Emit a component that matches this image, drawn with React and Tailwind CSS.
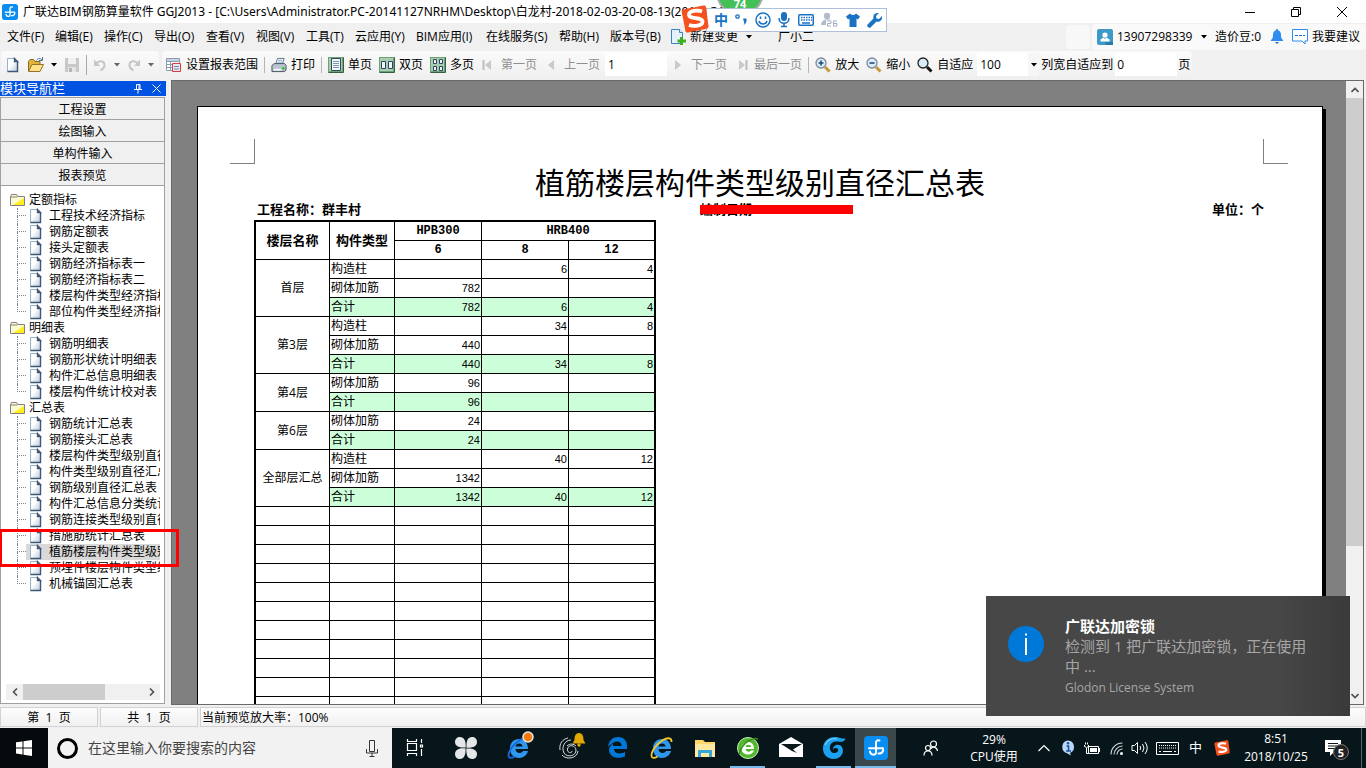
import React, { useState } from "react";

const menus = [
  ["文件(F)", "w-12"],
  ["编辑(E)", "w-[49px]"],
  ["操作(C)", "w-[50px]"],
  ["导出(O)", "w-[52px]"],
  ["查看(V)", "w-[50px]"],
  ["视图(V)", "w-[50px]"],
  ["工具(T)", "w-[49px]"],
  ["云应用(Y)", "w-[61px]"],
  ["BIM应用(I)", "w-[70px]"],
  ["在线服务(S)", "w-[73px]"],
  ["帮助(H)", "w-[51px]"],
  ["版本号(B)", "w-[61px]"],
];

const tree = [
  {
    name: "定额指标",
    items: ["工程技术经济指标", "钢筋定额表", "接头定额表", "钢筋经济指标表一", "钢筋经济指标表二", "楼层构件类型经济指标表", "部位构件类型经济指标表"],
  },
  {
    name: "明细表",
    items: ["钢筋明细表", "钢筋形状统计明细表", "构件汇总信息明细表", "楼层构件统计校对表"],
  },
  {
    name: "汇总表",
    items: [
      "钢筋统计汇总表",
      "钢筋接头汇总表",
      "楼层构件类型级别直径汇总表",
      "构件类型级别直径汇总表",
      "钢筋级别直径汇总表",
      "构件汇总信息分类统计表",
      "钢筋连接类型级别直径汇总表",
      "措施筋统计汇总表",
      "植筋楼层构件类型级别直径汇总表",
      "预埋件楼层构件类型级别汇总表",
      "机械锚固汇总表",
    ],
  },
];

const floors = [
  { name: "首层", rows: [["构造柱", "", "6", "4"], ["砌体加筋", "782", "", ""], ["合计", "782", "6", "4"]] },
  { name: "第3层", rows: [["构造柱", "", "34", "8"], ["砌体加筋", "440", "", ""], ["合计", "440", "34", "8"]] },
  { name: "第4层", rows: [["砌体加筋", "96", "", ""], ["合计", "96", "", ""]] },
  { name: "第6层", rows: [["砌体加筋", "24", "", ""], ["合计", "24", "", ""]] },
  { name: "全部层汇总", rows: [["构造柱", "", "40", "12"], ["砌体加筋", "1342", "", ""], ["合计", "1342", "40", "12"]] },
];

const Caret = ({ className = "" }) => (
  <svg className={`shrink-0 ${className}`} width="6" height="4" viewBox="0 0 6 4">
    <path d="M0 0h6L3 3.5z" fill="currentColor" />
  </svg>
);

const Sep = () => <span className="mx-1.5 h-4 w-px shrink-0 bg-[#b5b5b5]" />;

const DocIcon = () => (
  <svg className="shrink-0" width="16" height="16" viewBox="0 0 16 16">
    <defs>
      <linearGradient id="paper" x1="0" y1="0" x2="1" y2="1">
        <stop offset=".4" stopColor="#fff" />
        <stop offset="1" stopColor="#b9c9de" />
      </linearGradient>
    </defs>
    <path d="M2.500 1.500h7l3 3v10h-10z" fill="url(#paper)" stroke="#9db1cf" />
    <path d="M12.500 4.500v10h-10M9.500 1.500v3h3z" fill="none" stroke="#3c5777" strokeWidth="1.400" />
  </svg>
);

const FolderIcon = () => (
  <svg className="shrink-0" width="16" height="14" viewBox="0 0 16 14">
    <path d="M.5 12.500v-9l1-2h5l1 2h7v9z" fill="#fffbd0" stroke="#808080" />
    <path d="M14 5v7H3z" fill="#ffee1a" />
    <path d="M.5 4h6.500" stroke="#808080" />
  </svg>
);

const OpenIcon = () => (
  <svg className="shrink-0" width="18" height="16" viewBox="0 0 18 16">
    <path d="M1.500 14V4.500l1.500-2h3.500l1.500 2h5V7" fill="#e2b33f" stroke="#8a6a20" />
    <path d="M1.500 14.500L5 7.500h11.500L13 14.500z" fill="#ffe08a" stroke="#96732a" />
    <path d="M9.500 3.500c1.500-2.500 4-2.500 5.500-.5M15.500 0v3.500H12" fill="none" stroke="#52729c" />
  </svg>
);

const SaveIcon = () => (
  <svg className="shrink-0" width="16" height="16" viewBox="0 0 16 16">
    <path d="M1 1h14v14H1z" fill="#c8c8c8" />
    <path d="M4 1h8v6H4z" fill="#f0f0f0" />
    <path d="M4 10h8v5H4z" fill="#e6e6e6" />
    <path d="M5 11h3v4H5z" fill="#b5b5b5" />
  </svg>
);

const UndoIcon = ({ flip }) => (
  <svg className={flip ? "shrink-0 -scale-x-100" : "shrink-0"} width="14" height="14" viewBox="0 0 14 14">
    <path d="M3 5.500C6 2 11 2.500 11.500 6.500 12 10 9 11.500 7.500 12.500" fill="none" stroke="#c6c6c6" strokeWidth="2" />
    <path d="M1 1.500v6.500h6z" fill="#c6c6c6" />
  </svg>
);

const RangeIcon = () => (
  <svg className="shrink-0" width="16" height="16" viewBox="0 0 16 16">
    <path d="M.5 1.500h13v12H.5zM.5 4.500h13M.5 7.500h13M.5 10.500h13M4.500 1.500v12" fill="#fff" stroke="#8c9bb0" />
    <path d="M1 2h12v2H1z" fill="#c6d3e4" />
    <path d="M6.500 6.500h8v8h-8z" fill="#e3eaf4" stroke="#d93a3a" />
    <path d="M8 9.500h5M8 12h5" stroke="#6f86a8" />
  </svg>
);

const PrintIcon = () => (
  <svg className="shrink-0" width="16" height="16" viewBox="0 0 17 16">
    <path d="M5 7l2-6h7l-2 6z" fill="#fff" stroke="#5c6f87" />
    <path d="M7.500 3h4.500M7 5h4.500" stroke="#7ba0cf" />
    <path d="M1 8.500l2.500-2h11l1.500 2v5l-2 1.500H1z" fill="#b9c4d0" stroke="#44525f" />
    <path d="M3 12h8v2H3z" fill="#f2f5f8" />
    <circle cx="13" cy="11.500" r="1.500" fill="#2fc32f" />
  </svg>
);

const PagesIcon = ({ kind }) => (
  <svg className="shrink-0" width="16" height="16" viewBox="0 0 16 16">
    <rect width="16" height="16" rx="1" fill="#35603d" />
    <path d="M0 0h15v15H0z" fill="#6ba377" />
    <path d="M1 1h13v13H1z" fill="#a9cdb0" />
    {kind === 1 && <path d="M3.500 1.500h9v12h-9z" fill="#f4f8ff" stroke="#30455c" />}
    {kind === 1 && <path d="M5 4.500h6M5 6.500h6M5 8.500h6M5 10.500h6" stroke="#7e95b5" />}
    {kind === 2 && <path d="M2.500 4.500h4v7h-4zM9.500 4.500h4v7h-4z" fill="#eef4ff" stroke="#30455c" />}
    {kind === 4 && <path d="M3.500 2.500h3v4h-3zM9.500 2.500h3v4h-3zM3.500 9.500h3v4h-3zM9.500 9.500h3v4h-3z" fill="#eef4ff" stroke="#30455c" />}
  </svg>
);

const PageArrow = ({ bar, left }) => (
  <svg className={left ? "shrink-0 -scale-x-100" : "shrink-0"} width="11" height="12" viewBox="0 0 11 12">
    <path d="M2 1l6 5-6 5z" fill="#c9c9c9" />
    {bar && <path d="M9.500 1v10" stroke="#bdbdbd" strokeWidth="2" />}
  </svg>
);

const LensIcon = ({ sign, dark }) => (
  <svg className="shrink-0" width="16" height="16" viewBox="0 0 16 16">
    <path d="M10 10l4.500 4.500" stroke={dark ? "#111" : "#c8963a"} strokeWidth="3" />
    <circle cx="6" cy="6" r="5" fill="#d8ebf8" stroke={dark ? "#222" : "#7d8b99"} strokeWidth="1.300" />
    {sign === "+" && <path d="M3.500 6h5M6 3.500v5" stroke="#234a78" strokeWidth="1.600" />}
    {sign === "-" && <path d="M3.500 6h5" stroke="#234a78" strokeWidth="1.600" />}
  </svg>
);

const AppIcon = ({ size }) => (
  <svg className="shrink-0" width={size} height={size} viewBox="0 0 24 24">
    <rect width="24" height="24" rx="4" fill="#0a8df0" />
    <path
      d="M15.500 4.500c-2.500-.6-3.500.5-3.500 2.500v9.500c0 3-5.500 3-6-1M5 12.200h14M19 12.200c1 3-1.500 6-4.500 5.300"
      fill="none"
      stroke="#fff"
      strokeWidth="2"
      strokeLinecap="round"
    />
  </svg>
);

const SogouIcon = ({ size }) => (
  <svg className="shrink-0" width={size} height={size} viewBox="0 0 28 28">
    <path d="M2 4.500L22.500.5c1.500-.2 2.300.4 2.500 1.500l2.500 19c.2 1.500-.5 2.500-2 2.800L7 27.500c-1.500.2-2.500-.5-2.700-2L.8 7C.6 5.500 1 4.700 2 4.500z" fill="#f4511e" />
    <path d="M21 6.500c-4-1.500-13-1-13 3.200 0 4.800 13.500 2.300 13.500 7 0 4.300-9 4.800-13.500 3.300" fill="none" stroke="#fff" strokeWidth="3.800" />
  </svg>
);

function TitleBar() {
  return (
    <header className="flex h-[23px] shrink-0 items-center bg-white pl-0.5">
      <AppIcon size={16} />
      <h1 className="ml-[5px] font-['Noto_Sans','Noto_Sans_CJK_SC',sans-serif] whitespace-nowrap">
        广联达BIM钢筋算量软件 GGJ2013 - [C:\Users\Administrator.PC-20141127NRHM\Desktop\白龙村-2018-02-03-20-08-13(2011).GGJ12]
      </h1>
      <div className="ml-auto flex h-full pr-px">
        <button aria-label="最小化" className="flex w-[46px] items-center justify-center">
          <svg width="10" height="10" viewBox="0 0 10 10"><path d="M0 5.500h10" stroke="#000" /></svg>
        </button>
        <button aria-label="还原" className="flex w-[46px] items-center justify-center">
          <svg width="10" height="10" viewBox="0 0 10 10"><path d="M.5 2.500h7v7h-7zM2.500 2.500v-2h7v7h-2" fill="none" stroke="#000" /></svg>
        </button>
        <button aria-label="关闭" className="flex w-[46px] items-center justify-center">
          <svg width="10" height="10" viewBox="0 0 10 10"><path d="M0 0l10 10M10 0L0 10" stroke="#000" /></svg>
        </button>
      </div>
    </header>
  );
}

function MenuBar() {
  return (
    <nav className="flex h-[27px] shrink-0 items-center bg-[#f0f0f0] pl-[7px]">
      {menus.map(([label, width]) => (
        <button key={label} className={`shrink-0 text-left whitespace-nowrap ${width}`}>{label}</button>
      ))}
      <button className="flex shrink-0 items-center gap-1 whitespace-nowrap">
        <svg width="15" height="16" viewBox="0 0 15 16">
          <path d="M.5.500h8l3 3v11H.5z" fill="#e3f2fc" stroke="#3e82b8" />
          <path d="M8.500.500v3h3" fill="#fff" stroke="#3e82b8" />
          <path d="M9 8h3v2.500h3v3h-3V16H9v-2.500H6.500v-3H9z" fill="#3fae1f" />
        </svg>
        新建变更
        <Caret className="ml-1" />
      </button>
      <button className="ml-[26px] shrink-0 whitespace-nowrap">广小二</button>
      <div className="ml-auto h-6 w-6 shrink-0 rounded-sm bg-[#f8f8f8]" />
      <div className="ml-0.5 flex h-[26px] shrink-0 items-center rounded-sm bg-[#f9f9f9] pr-1.5 pl-[5px] whitespace-nowrap">
        <svg width="16" height="16" viewBox="0 0 16 16">
          <rect width="16" height="16" rx="2" fill="#3d9ac8" />
          <path d="M8 13h8v3H9z" fill="#2b7ba6" />
          <circle cx="8" cy="6" r="2.600" fill="#fff" />
          <path d="M3.500 12.500v-2l3-2 1.500 1.500L9.500 8.500l3 2v2z" fill="#fff" />
        </svg>
        <button className="ml-1 flex w-[98px] items-center gap-[9px]">13907298339<Caret /></button>
        <a href="#beans" className="w-14">造价豆:0</a>
        <svg width="12" height="15" viewBox="0 0 12 15">
          <path d="M6 0c.8 0 1 .5 1 1.200C9.500 2 10 4 10 6c0 2.500.5 3.500 2 5v1H0v-1c1.500-1.500 2-2.500 2-5 0-2 .5-4 3-4.800C5 .5 5.200 0 6 0z" fill="#2f8cf0" />
          <path d="M4 13h4l-2 2z" fill="#1c6fd0" />
        </svg>
        <svg className="ml-[9px]" width="16" height="16" viewBox="0 0 16 16">
          <path d="M.5.500h15v11.500H13V15l-3-3H.5z" fill="#fff" stroke="#2f8cf0" />
          <path d="M3 6.500h10" stroke="#1c6fd0" strokeDasharray="3 1" />
        </svg>
        <a href="#suggest" className="ml-1">我要建议</a>
      </div>
    </nav>
  );
}

function Tool({ icon, children, disabled, className = "gap-1" }) {
  return (
    <button disabled={disabled} className={`flex shrink-0 items-center whitespace-nowrap ${disabled ? "text-[#8f8f8f]" : ""} ${className}`}>
      {icon}
      {children}
    </button>
  );
}

function ToolBar() {
  const [page, setPage] = useState("1");
  const [fit, setFit] = useState("0");
  return (
    <div className="flex h-[29px] shrink-0 bg-[#f0f0f0] pl-px">
      <div className="flex h-[27px] w-[158px] shrink-0 items-center rounded-sm bg-linear-to-b from-[#fbfbfb] to-[#efefef] pl-1">
        <button aria-label="新建"><DocIcon /></button>
        <button aria-label="打开" className="ml-1.5 flex items-center gap-1.5"><OpenIcon /><Caret /></button>
        <button aria-label="保存" className="ml-[7px]"><SaveIcon /></button>
        <span className="mx-1.5 h-5 w-px bg-[#a8a8a8]" />
        <button aria-label="撤销" className="flex items-center gap-[7px] text-[#666]"><UndoIcon /><Caret /></button>
        <button aria-label="重做" className="ml-[7px] flex items-center gap-[7px] text-[#666]"><UndoIcon flip /><Caret /></button>
      </div>
      <div className="ml-[3px] flex h-[27px] shrink-0 items-center rounded-sm bg-linear-to-b from-[#fbfbfb] to-[#efefef] pr-0.5 pl-1">
        <Tool icon={<RangeIcon />}>设置报表范围</Tool>
        <Sep />
        <Tool icon={<PrintIcon />}>打印</Tool>
        <Sep />
        <Tool icon={<PagesIcon kind={1} />}>单页</Tool>
        <Tool icon={<PagesIcon kind={2} />} className="ml-[7px] gap-1">双页</Tool>
        <Tool icon={<PagesIcon kind={4} />} className="ml-[7px] gap-1">多页</Tool>
        <Tool icon={<PageArrow bar left />} disabled className="ml-2 w-[63px] gap-2">第一页</Tool>
        <Tool icon={<PageArrow left />} disabled className="gap-2">上一页</Tool>
        <input aria-label="页码" value={page} onChange={(e) => setPage(e.target.value)} className="ml-[5px] h-[23px] w-[62px] bg-white px-[3px]" />
        <Tool icon={<PageArrow />} disabled className="ml-1.5 gap-[7px]">下一页</Tool>
        <Tool icon={<PageArrow bar />} disabled className="ml-2.5 gap-1.5">最后一页</Tool>
        <Sep />
        <Tool icon={<LensIcon sign="+" />}>放大</Tool>
        <Tool icon={<LensIcon sign="-" />} className="ml-[7px] gap-1">缩小</Tool>
        <Tool icon={<LensIcon dark />} className="ml-[7px] gap-1">自适应</Tool>
        <div className="relative ml-1 h-[23px] w-[62px]">
          <select aria-label="缩放比例" defaultValue="100" className="h-full w-full appearance-none bg-white px-[3px]">
            <option>50</option>
            <option>100</option>
            <option>200</option>
          </select>
          <span className="pointer-events-none absolute inset-y-0 right-0 flex w-[11px] items-center justify-center bg-[#f6f6f6]"><Caret /></span>
        </div>
        <label htmlFor="fit-pages" className="ml-0.5 whitespace-nowrap">列宽自适应到</label>
        <input id="fit-pages" value={fit} onChange={(e) => setFit(e.target.value)} className="ml-0.5 h-[23px] w-[62px] bg-white px-0.5" />
        <span className="ml-px">页</span>
      </div>
    </div>
  );
}

function Tree() {
  const [selected, setSelected] = useState("植筋楼层构件类型级别直径汇总表");
  return (
    <div className="flex min-h-0 flex-1 flex-col border border-t-0 border-[#a0a0a0] bg-white pr-1 pb-[3px] pl-[5px]">
      <div className="min-h-0 flex-1 overflow-hidden pt-1.5">
        {tree.map((group) => (
          <section key={group.name}>
            <div className="flex h-4 items-center gap-[3px] pl-1"><FolderIcon />{group.name}</div>
            <ul>
              {group.items.map((item, i) => (
                <li key={item} className="flex h-4 pl-[11px]">
                  <span className="flex w-[9px] shrink-0 flex-col">
                    <span className="h-2 border-b border-l border-dotted border-[#808080]" />
                    {i < group.items.length - 1 && <span className="h-2 border-l border-dotted border-[#808080]" />}
                  </span>
                  <button
                    onClick={() => setSelected(item)}
                    className={`flex flex-1 items-center gap-[5px] overflow-hidden pl-0.5 whitespace-nowrap ${selected === item ? "bg-[#d9d9d9]" : ""}`}
                  >
                    <DocIcon />
                    {item}
                  </button>
                </li>
              ))}
            </ul>
          </section>
        ))}
      </div>
      <div className="flex h-4 shrink-0 bg-[#f0f0f0]">
        <button aria-label="向左" className="flex w-[17px] items-center justify-center">
          <svg width="6" height="8" viewBox="0 0 6 8"><path d="M5 .500L1.500 4 5 7.500" fill="none" stroke="#505050" strokeWidth="1.600" /></svg>
        </button>
        <div className="flex-1"><div className="h-full w-[68%] bg-[#cdcdcd]" /></div>
        <button aria-label="向右" className="flex w-[17px] items-center justify-center">
          <svg width="6" height="8" viewBox="0 0 6 8"><path d="M1 .500L4.500 4 1 7.500" fill="none" stroke="#505050" strokeWidth="1.600" /></svg>
        </button>
      </div>
    </div>
  );
}

function Sidebar() {
  return (
    <aside className="flex w-[166px] shrink-0 flex-col bg-[#f0f0f0] pt-px pb-0.5">
      <div className="flex h-[15px] shrink-0 items-center bg-[#0053e2] pr-[5px] text-[13px] text-white">
        模块导航栏
        <button aria-label="固定" className="ml-auto">
          <svg width="8" height="10" viewBox="0 0 8 10"><path d="M2.500 5.500v-5h3.500v5M0 5.500h8M4 5.500V9.500M5 1v4" fill="none" stroke="#fff" /></svg>
        </button>
        <button aria-label="关闭导航栏" className="ml-2.5">
          <svg width="9" height="9" viewBox="0 0 9 9"><path d="M.5.500l8 8M8.500.500l-8 8" stroke="#fff" /></svg>
        </button>
      </div>
      <div className="mt-px mr-px flex min-h-0 flex-1 flex-col">
        <div className="border border-b-0 border-[#a0a0a0]">
          {["工程设置", "绘图输入", "单构件输入", "报表预览"].map((name) => (
            <button key={name} className="block h-[22px] w-full border-b border-b-[#a0a0a0] bg-[#f0f0f0] pt-0.5 text-center">{name}</button>
          ))}
        </div>
        <Tree />
      </div>
    </aside>
  );
}

const headCell = "border-r border-b border-black p-0 font-bold";
const monoCell = "font-['Liberation_Mono',monospace] text-xs leading-[18px]";
const cell = "border-r border-b border-black p-0";

function ReportTable() {
  return (
    <table className="ml-14 w-[402px] table-fixed border-separate border-spacing-0 border-2 border-black leading-[18px] [&_tr>*:last-child]:border-r-0">
      <colgroup>
        <col className="w-[74px]" />
        <col className="w-[65px]" />
        <col className="w-[87px]" />
        <col className="w-[87px]" />
        <col className="w-[85px]" />
      </colgroup>
      <thead>
        <tr className="h-[19px]">
          <th rowSpan={2} className={`${headCell} pb-0.5 text-[13px]`}>楼层名称</th>
          <th rowSpan={2} className={`${headCell} pb-0.5 text-[13px]`}>构件类型</th>
          <th className={`${headCell} ${monoCell}`}>HPB300</th>
          <th colSpan={2} className={`${headCell} ${monoCell}`}>HRB400</th>
        </tr>
        <tr className="h-[19px]">
          {["6", "8", "12"].map((d) => (
            <th key={d} className={`${headCell} ${monoCell}`}>{d}</th>
          ))}
        </tr>
      </thead>
      {floors.map((floor) => (
        <tbody key={floor.name}>
          {floor.rows.map((row, i) => (
            <tr key={row[0]} className="h-[19px]">
              {i === 0 && <td rowSpan={floor.rows.length} className={`${cell} text-center`}>{floor.name}</td>}
              {row.map((value, j) => (
                <td
                  key={j}
                  className={`${cell} ${row[0] === "合计" ? "bg-[#ccffd9]" : ""} ${j === 0 ? "pl-px" : "pr-px text-right font-['Liberation_Sans',sans-serif] text-[11px] leading-[18px]"}`}
                >
                  {value}
                </td>
              ))}
            </tr>
          ))}
        </tbody>
      ))}
      <tbody>
        {Array.from({ length: 12 }, (_, i) => (
          <tr key={i} className="h-[19px]">
            <td className={cell} /><td className={cell} /><td className={cell} /><td className={cell} /><td className={cell} />
          </tr>
        ))}
      </tbody>
    </table>
  );
}

function Preview() {
  return (
    <main className="mr-0.5 mb-px ml-[5px] flex min-w-0 flex-1 border border-[#696969] bg-[#808080]">
      <div className="min-w-0 flex-1 overflow-hidden pt-[25px] pr-[23px] pl-[25px]">
        <article className="h-[900px] border border-black bg-white pt-8 shadow-[3px_3px_0_#000]">
          <div className="flex justify-between pr-[34px] pl-8">
            <div className="h-[25px] w-[25px] border-r border-b border-[#808080]" />
            <div className="h-[25px] w-[25px] border-b border-l border-[#808080]" />
          </div>
          <h2 className="mt-1 text-center text-[30px] leading-[30px]">植筋楼层构件类型级别直径汇总表</h2>
          <div className="mt-[3px] mr-[58px] mb-px ml-[59px] flex h-[18px] items-center text-[13px] font-bold">
            <span className="w-[44%]">工程名称：群丰村</span>
            <span className="relative">
              编制日期:
              <span className="absolute top-1 left-0 h-[9px] w-[153px] bg-[#fe0000]" />
            </span>
            <span className="ml-auto">单位：个</span>
          </div>
          <ReportTable />
        </article>
      </div>
      <div className="flex w-[17px] shrink-0 flex-col bg-[#f0f0f0]">
        <button aria-label="向上" className="flex h-[17px] items-center justify-center">
          <svg width="8" height="6" viewBox="0 0 8 6"><path d="M.5 5L4 1.500 7.500 5" fill="none" stroke="#505050" strokeWidth="1.600" /></svg>
        </button>
        <div className="flex-1"><div className="h-[76%] bg-[#cdcdcd]" /></div>
        <button aria-label="向下" className="flex h-[17px] items-center justify-center">
          <svg width="8" height="6" viewBox="0 0 8 6"><path d="M.5 1L4 4.500 7.500 1" fill="none" stroke="#505050" strokeWidth="1.600" /></svg>
        </button>
      </div>
    </main>
  );
}

function StatusBar() {
  const box = "flex items-center border border-[#d2d2d2] bg-linear-to-b from-[#fdfdfd] to-[#f1f1f1] pt-0.5";
  return (
    <footer className="flex h-[22px] shrink-0 gap-0.5 bg-[#f0f0f0] pt-px pb-px text-xs">
      <div className={`${box} w-[98px] justify-center`}>第&nbsp; 1&nbsp; 页</div>
      <div className={`${box} w-[98px] justify-center`}>共&nbsp; 1&nbsp; 页</div>
      <div className={`${box} flex-1 pl-px`}>当前预览放大率：100%</div>
    </footer>
  );
}

const EdgeGlyph = ({ color }) => (
  <path d="M2 11C3 4 7 1 12 1c6 0 9 4 9 9v3H8c0 4 5 6 11 3v4.500C10 24 3 20 3 14c0-3 2-5.500 5-7-1.500 1-1 2-1 3h8.500C16 3.500 7 4 2 11z" fill={color} />
);

const IeGlyph = ({ ring }) => (
  <>
    <path d="M12 3c5.500 0 9 4 9 10H8.500c0 4 5.500 5.500 7.500 2h5c-1 4-4.500 7-9 7-5.500 0-9-4-9-9.500C3 7 6.500 3 12 3zM8.500 10.500h7c0-4-6.500-4-7 0z" fill="#2f98ee" />
    <path d="M21.500 6C22 2 18 1 13 4 6 8 1 16 1.500 20c.3 2.500 3 2.500 6 .5" fill="none" stroke={ring} strokeWidth="1.800" />
  </>
);

const petal = "M11.700 11.500C5 12 1 10 1 6c0-3 2-5 5-5 4 0 6 3.500 5.700 10.500z";

const apps = [
  {
    name: "任务视图",
    box: "w-[46px]",
    art: <path d="M4.500 3v2.500h9V3M4.500 20v-2.500h9V20M4.500 7.500h9v7h-9zM18.500 3v4M18.500 13v7M17.500 9h2v2h-2z" fill="none" stroke="#fff" strokeWidth="1.200" />,
  },
  {
    name: "风扇",
    box: "w-14",
    art: (
      <g fill="#e4e6e8">
        <path d={petal} />
        <path d={petal} transform="rotate(90 12 12)" />
        <path d={petal} transform="rotate(180 12 12)" />
        <path d={petal} transform="rotate(270 12 12)" />
      </g>
    ),
  },
  {
    name: "浏览器",
    box: "w-[50px]",
    art: <><IeGlyph ring="#1669d8" /><circle cx="21" cy="1" r="5" fill="#f47a0b" stroke="#e8e8e8" strokeWidth="1.500" /></>,
  },
  {
    name: "消息",
    box: "w-[52px]",
    art: (
      <>
        <path d="M14 15c0 3-5 2-4.500-2 .5-5 8-4 8.500 1 .5 6-9 8-12 3C3 11 7 4 13 4M2 14C1 7 5 3 10 2M4 19c4 5 15 4 16-4M9 10c3-3 7-2 9 0" fill="none" stroke="#d8dcde" />
        <path d="M21-3c4 0 4.500 4 4.500 7l2 3.500h-13l2-3.500c0-3 .5-7 4.500-7z" fill="#e0a800" />
        <circle cx="21" cy="9" r="1.700" fill="#e0a800" />
      </>
    ),
  },
  { name: "Edge", box: "w-11", art: <EdgeGlyph color="#0078d7" /> },
  { name: "Internet Explorer", box: "w-[43px]", art: <IeGlyph ring="#f6c92c" /> },
  {
    name: "文件资源管理器",
    box: "w-[43px]",
    art: (
      <>
        <path d="M2 4h8l2 2h10v15H2z" fill="#ffd869" />
        <path d="M2 8h20v13H2z" fill="#ffe9a0" />
        <path d="M5 21v-7h14v7h-3v-4H8v4z" fill="#35a7dd" />
      </>
    ),
  },
  {
    name: "安全浏览器",
    box: "w-[43px]",
    line: true,
    art: (
      <>
        <circle cx="12" cy="12" r="10.500" fill="#4fb82b" stroke="#cdeebd" />
        <path d="M12 6c4 0 6 3 6 7H9.500c.5 3 4 3.500 5.500 1.500h3C17 17 15 18.500 12 18.500c-4 0-6.500-2.500-6.500-6S8.500 6 12 6zM9.500 11H15c0-3-5-3-5.500 0z" fill="#fff" />
        <path d="M22 3c-4-2-15 2-19 15" fill="none" stroke="#338d16" strokeWidth="1.500" />
      </>
    ),
  },
  {
    name: "邮件",
    box: "w-[43px]",
    art: <><path d="M0 8l12-7 12 7v13H0z" fill="#fff" /><path d="M2 8h21l-9 5.500 4 3.500-5-2z" fill="#0a181c" /></>,
  },
  {
    name: "广联达G",
    box: "w-[43px]",
    line: true,
    art: (
      <>
        <path d="M23.500 2.500c-1.500 4-5 3.500-8 3-9-1.500-10 11-3 11.500 3.500 0 4.500-3 3-4.500-1.500-1-3.500-.5-4.500 1 0-5 6.500-6.500 9-2.500 3 6-1.500 12-8.500 12C5 23 .5 18 1 11.500 1.500 5 7 .5 13.500 1c3.500.3 7 2 10 1.500z" fill="#1ea0f0" />
        <path d="M3 9c2-5 7-7 12-6" fill="none" stroke="#7fd4ff" strokeWidth="1.200" />
      </>
    ),
  },
];

function TaskBar() {
  return (
    <footer className="flex h-10 shrink-0 bg-[#07161a] text-xs text-white">
      <button aria-label="开始" className="flex w-12 shrink-0 items-center justify-center bg-[#060a0c]">
        <svg width="16" height="16" viewBox="0 0 16 16"><path d="M0 2.300L6.500 1.400v6H0zM7.500 1.200L16 0v7.400H7.500zM0 8.500h6.500v6L0 13.600zM7.500 8.500H16V16l-8.500-1.200z" fill="#fff" /></svg>
      </button>
      <div className="flex w-[344px] shrink-0 items-center bg-[#f2f2f2] pr-3.5 pl-[9px]">
        <span className="h-[21px] w-[21px] shrink-0 rounded-full border-[3px] border-black" />
        <input aria-label="搜索" placeholder="在这里输入你要搜索的内容" className="ml-2.5 min-w-0 flex-1 text-sm text-black placeholder:text-[#444]" />
        <svg width="12" height="17" viewBox="0 0 12 17"><path d="M3.500.500h5v11h-5zM.5 9v4h11V9M6 13v3M3.500 16.500h5" fill="none" stroke="#333" /></svg>
      </div>
      {apps.map((app) => (
        <button key={app.name} aria-label={app.name} className={`relative flex shrink-0 items-center justify-center ${app.box}`}>
          <svg className="overflow-visible" width="24" height="24" viewBox="0 0 24 24">{app.art}</svg>
          {app.line && <span className="absolute inset-x-1 bottom-0 h-0.5 bg-[#76b9ed]" />}
        </button>
      ))}
      <button aria-label="GGJ2013" className="flex w-[41px] shrink-0 items-center justify-center border-b-2 border-[#76b9ed] bg-[#3a484c] pt-0.5"><AppIcon size={24} /></button>

      <div className="ml-auto flex shrink-0 items-center pr-1">
        <svg width="16" height="16" viewBox="0 0 16 16">
          <g fill="none" stroke="#fff" strokeWidth="1.200">
            <circle cx="10.500" cy="4" r="3" /><path d="M7.500 9c2-3 6.500-2 7 2" />
            <circle cx="5" cy="8" r="2.500" /><path d="M1 15.500c0-6 8-6 8 0" />
          </g>
        </svg>
        <div className="ml-[17px] w-[76px] text-center leading-[17px]">29%<br />CPU使用</div>
        <svg className="ml-1.5" width="12" height="8" viewBox="0 0 12 8"><path d="M.5 7L6 1.500 11.500 7" fill="none" stroke="#fff" strokeWidth="1.200" /></svg>
        <svg className="ml-[11px]" width="14" height="16" viewBox="0 0 14 16">
          <path d="M7 .500a6.500 6.500 0 0 1 2 12.500l1 2.500-4-2.300A6.500 6.500 0 0 1 7 .500z" fill="#b9d8f5" />
          <path d="M5.500 6h2v5M5 11h5" fill="none" stroke="#1b4fae" strokeWidth="1.600" />
          <circle cx="7" cy="3.300" r="1.200" fill="#1b4fae" />
        </svg>
        <svg className="ml-[9px]" width="16" height="13" viewBox="0 0 16 13">
          <path d="M4.500 4.500h10v7h-10zM15.500 6v4M2.500 6v5.500h2M.5 3v1.500q2 2 4 0V3M1.500.500v2M3.500.500v2" fill="none" stroke="#fff" />
          <path d="M6 6h7v4H6z" fill="#fff" />
        </svg>
        <svg className="ml-2.5" width="13" height="13" viewBox="0 0 13 13">
          <path d="M1 12.500C1 6 6 1 12.500 1M4 12.500C4 8 8 4 12.500 4M7 12.500C7 9.500 9.500 7 12.500 7" fill="none" stroke="#d8dcde" strokeWidth="1.100" />
          <circle cx="11.500" cy="11.500" r="1.500" fill="#fff" />
        </svg>
        <svg className="ml-2" width="17" height="14" viewBox="0 0 17 14">
          <path d="M1 4.500h2.500l3-3v11l-3-3H1zM9 5q1.500 2 0 4M11.500 3q3 4 0 8M14 1q4.500 6 0 12" fill="none" stroke="#fff" />
        </svg>
        <svg className="ml-2" width="23" height="13" viewBox="0 0 23 13">
          <path d="M.5.500h22v12H.5z" fill="none" stroke="#fff" />
          <path d="M3 3.500h18M3 6h18" stroke="#fff" strokeDasharray="1 1" />
          <path d="M3 9.500h2M7 9.500h9M18 9.500h2" stroke="#fff" />
        </svg>
        <span className="ml-2.5 text-[13px]">中</span>
        <span className="ml-3"><SogouIcon size={16} /></span>
        <time className="ml-2.5 w-[72px] text-center leading-[18px]">8:51<br />2018/10/25</time>
        <button aria-label="操作中心" className="relative ml-[13px] h-6 w-7">
          <svg width="16" height="16" viewBox="0 0 16 16"><path d="M0 0h16v12H9l-4 4v-4H0z" fill="#fff" /><path d="M3 3.500h10M3 6h10M3 8.500h7" stroke="#0a181c" /></svg>
          <span className="absolute top-2 left-2 flex h-4 w-4 items-center justify-center rounded-full border border-[#777] bg-[#222] text-[11px] leading-none font-bold">5</span>
        </button>
        <span className="ml-2 h-10 w-px bg-[#5a6568]" />
      </div>
    </footer>
  );
}

function ImeBar() {
  return (
    <div className="absolute top-2 left-[706px] flex h-6 w-[181px] items-center justify-between border border-[#aebfd8] bg-white pr-1 pl-[7px] text-[#1a72c4]">
      <span className="absolute -top-1 -left-[26px]"><SogouIcon size={28} /></span>
      <button className="text-sm font-bold">中</button>
      <svg width="12" height="12" viewBox="0 0 12 12"><circle cx="2.500" cy="2.500" r="1.700" fill="none" stroke="currentColor" strokeWidth="1.300" /><path d="M8 4.500h3.500c.5 3-.5 5.500-3 6.500 1-1.500 1-2 .5-3z" fill="currentColor" /></svg>
      <svg width="16" height="16" viewBox="0 0 16 16"><circle cx="8" cy="8" r="7" fill="none" stroke="currentColor" strokeWidth="1.500" /><path d="M4 9c1 4 7 4 8 0" fill="none" stroke="currentColor" strokeWidth="1.500" /><path d="M5.500 4.500v2.500M10.500 4.500v2.500" stroke="currentColor" strokeWidth="1.600" /></svg>
      <svg width="12" height="16" viewBox="0 0 12 16"><rect x="3" width="6" height="9" rx="3" fill="currentColor" /><path d="M1 6c0 7 10 7 10 0M6 11v3M3 14.500h6" fill="none" stroke="currentColor" strokeWidth="1.500" /></svg>
      <svg width="16" height="12" viewBox="0 0 16 12"><rect x=".75" y=".75" width="14.500" height="10.500" rx="1" fill="#fff" stroke="currentColor" strokeWidth="1.500" /><path d="M3 3.500h11M3 6h11" stroke="currentColor" strokeWidth="1.500" strokeDasharray="1.500 1" /><path d="M4 9h8" stroke="currentColor" strokeWidth="1.500" /></svg>
      <svg width="17" height="16" viewBox="0 0 17 16"><circle cx="6" cy="4" r="3.200" fill="#b3bccd" /><path d="M0 13c0-7 11-7 12-3v3z" fill="#b3bccd" /><rect x="5" y="8" width="12" height="7" fill="#fff" /><path d="M6 9h4v2.500H6.500V14H10M16 9h-3.500v5H16v-2.500h-3" fill="none" stroke="#a3aec2" /></svg>
      <svg width="14" height="14" viewBox="0 0 14 14"><path d="M4 .500q3 3 6 0l4 3-2 3-1.500-1V14h-7V5.500L2 6.500l-2-3z" fill="currentColor" /></svg>
      <svg width="15" height="15" viewBox="0 0 15 15"><path d="M12 0L9 3l.5 2.500L12 6l3-3c.8 4-2 6.500-5.500 5.500L3.500 14.500c-2 1-4-1-3-3L6.500 5.500C5.500 2 8.500-.5 12 0z" fill="currentColor" /></svg>
    </div>
  );
}

function Toast() {
  return (
    <div role="status" className="absolute right-4 bottom-[52px] flex h-[120px] w-[364px] bg-linear-to-r from-[#474747] from-80% to-[#3a3a3a] pt-5 pl-[22px]">
      <svg className="mt-2.5 shrink-0" width="36" height="36" viewBox="0 0 36 36">
        <circle cx="18" cy="18" r="18" fill="#0078d7" />
        <path d="M18 12v17M18 7.500v2" stroke="#fff" strokeWidth="2" />
      </svg>
      <div className="ml-[21px] w-[250px] text-[15px] leading-5 text-[#a6a6a6]">
        <p className="font-bold text-white">广联达加密锁</p>
        <p>检测到 1 把广联达加密锁，正在使用中 ...</p>
        <p className="mt-0.5 text-xs leading-5">Glodon License System</p>
      </div>
    </div>
  );
}

export default function App() {
  return (
    <div className="relative flex h-screen flex-col overflow-hidden bg-[#f0f0f0] font-['Open_Sans','Noto_Sans_CJK_SC',sans-serif] text-xs text-black">
      <TitleBar />
      <MenuBar />
      <div className="h-px shrink-0 bg-[#f0f0f0]" />
      <ToolBar />
      <div className="flex min-h-0 flex-1">
        <Sidebar />
        <Preview />
      </div>
      <StatusBar />
      <TaskBar />

      <div className="absolute top-0 left-[716px] h-[17px] w-12 overflow-hidden">
        <div className="absolute -top-8 left-0 flex h-12 w-12 items-end justify-center rounded-full border-2 border-[#aaa] bg-[#43c056] pb-[3px] text-[11px] leading-[14px] font-bold text-white">74</div>
      </div>
      <ImeBar />
      <div className="pointer-events-none absolute top-[529px] -left-px h-[38px] w-[180px] border-3 border-[#fe0000]" />
      <Toast />
    </div>
  );
}
